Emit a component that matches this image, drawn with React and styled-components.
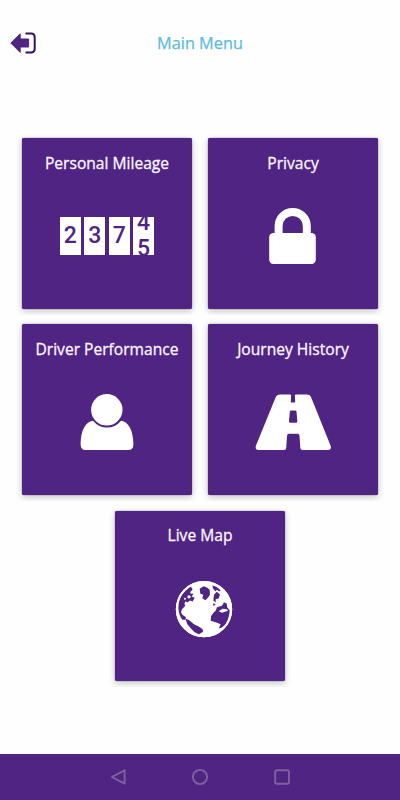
import React from 'react';
import styled, { createGlobalStyle } from 'styled-components';

const purple = '#502483';

const LogoutIcon = () => (
  <svg width="28" height="24" viewBox="0 0 28 24">
    <path d="M1.8 12 L11.2 2.8 V8 H19.6 V16 H11.2 V21.4 Z" fill={purple} stroke={purple} strokeLinejoin="round" />
    <path d="M16.5 2.6 H22 Q25.7 2.6 25.7 6.3 V17.8 Q25.7 21.5 22 21.5 H16.5" fill="none" stroke="#32115f" strokeWidth="2" />
  </svg>
)

const LockIcon = () => (
  <svg width="48" height="58" viewBox="0 0 48 58">
    <path d="M9.6 28 V19 A14.1 14.1 0 0 1 37.8 19 V28" fill="none" stroke="#fff" strokeWidth="8" />
    <rect x=".2" y="26" width="46.6" height="31" rx="4.2" fill="#fff" />
  </svg>
)

const PersonIcon = () => (
  <svg width="54" height="58" viewBox="0 0 54 58">
    <path d="M13 27.8 C5 29 .8 38 .6 51 Q.6 57 5.5 57 H48.5 Q53.4 57 53.4 51 C53.2 38 49 29 41 27.8 Q35.5 34.6 27 34.6 Q18.5 34.6 13 27.8 Z" fill="#fff" />
    <circle cx="26.8" cy="16.8" r="15.7" fill="#fff" />
  </svg>
)

const RoadIcon = () => (
  <svg width="76" height="57" viewBox="0 0 76 57">
    <path
      fillRule="evenodd"
      fill="#fff"
      d="M25 .5 H35 Q36.2 .5 36.1 2 L35.8 8.5 H40.2 L39.9 2 Q39.8 .5 41 .5 H52 Q55 .5 56.2 3.4 L75.5 51.5 Q77 56 72.5 56 H47.5 Q45.5 56 45.3 54 L44.5 42 Q44.3 39.8 42.5 39.8 H34 Q32.2 39.8 32 42 L31.2 54 Q31 56 29 56 H4 Q-.5 56 1 51.5 L20.6 3.4 Q21.8 .5 25 .5 Z M36 16.5 Q34.9 16.5 34.8 17.8 L34 27 Q33.9 28.8 35.3 28.8 H41 Q42.5 28.8 42.3 27 L41.5 17.8 Q41.4 16.5 40.2 16.5 Z"
    />
  </svg>
)

const GlobeIcon = () => (
  <GlobeSvg width="58" height="58" viewBox="29 30.5 174 174">
    <circle cx="116" cy="118" r="84.5" fill="#fff" />
    <g fill={purple}>
      <path d="M76 50 L82 58 L76 66 L84 72 L79 80 L88 84 L82 95 L74 92 L66 98 L61 94 L57 102 L60 108 L50 118 L47 127 L51 135 L62 142 L60 150 L51 150 C36 128 35 99 49 75 C56 64 65 55 76 50 Z" />
      <path d="M60 146 L72 151 L86 163 L100 170 L112 178 L113 186 L101 193 L88 187 L76 175 L66 163 Z" />
      <path d="M103 57 L115 49 L126 54 L133 60 L134 74 L129 82 L120 91 L111 85 L114 75 L105 72 Z" />
      <path d="M141 47 L153 51 L166 61 L162 65 L155 60 L150 64 L143 56 Z" />
      <path d="M146 75 L154 66 L164 74 L160 86 L151 88 L151 98 L144 92 Z" />
      <path d="M143 100 L151 103 L145 109 Z" />
      <path d="M155 112 L170 108 L176 97 L184 101 L186 113 L193 121 C193 136 188 152 179 166 L168 174 L160 176 L166 163 L151 157 L136 153 L137 139 L145 128 L151 123 Z" />
    </g>
    <g fill="#fff">
      <path d="M160 124 L172 117 L185 118 L188 123 L170 129 Z" />
      <circle cx="71" cy="81" r="5" />
      <circle cx="79" cy="68" r="4" />
      <circle cx="59" cy="87" r="3" />
    </g>
    <circle cx="116" cy="118" r="81.5" fill="none" stroke="#fff" strokeWidth="6" />
  </GlobeSvg>
)

const Odometer = () => (
  <Reels>
    <Reel>2</Reel>
    <Reel>3</Reel>
    <Reel>7</Reel>
    <Reel>
      <Turning>
        <span>4</span>
        <span>5</span>
      </Turning>
    </Reel>
  </Reels>
)

const MenuTile = ({ title, children }) => (
  <Tile>
    <TileTitle>{title}</TileTitle>
    <TileIcon>{children}</TileIcon>
  </Tile>
)

const App = () => (
  <Screen>
    <GlobalStyle />
    <Header>
      <LogoutButton aria-label="Log out"><LogoutIcon /></LogoutButton>
      <Title>Main Menu</Title>
    </Header>
    <Menu>
      <Row>
        <MenuTile title="Personal Mileage"><Odometer /></MenuTile>
        <MenuTile title="Privacy"><LockIcon /></MenuTile>
      </Row>
      <Row>
        <MenuTile title="Driver Performance"><PersonIcon /></MenuTile>
        <MenuTile title="Journey History"><RoadIcon /></MenuTile>
      </Row>
      <Row>
        <MenuTile title="Live Map"><GlobeIcon /></MenuTile>
      </Row>
    </Menu>
    <NavBar>
      <svg width="18" height="18" viewBox="0 0 18 18"><path d="M2.8 9 L15.6 2.3 V15.7 Z" /></svg>
      <svg width="18" height="18" viewBox="0 0 18 18"><circle cx="9" cy="9" r="7.1" /></svg>
      <svg width="18" height="18" viewBox="0 0 18 18"><rect x="2.2" y="2.2" width="13.8" height="13.6" rx="1.8" /></svg>
    </NavBar>
  </Screen>
)

const GlobalStyle = createGlobalStyle`
  body {
    margin: 0;
    background: #fff;
  }
  svg {
    display: block;
  }
`
const Screen = styled.div`
  display: flex;
  flex-direction: column;
  height: 800px;
  width: 400px;
  overflow: hidden;
  background: #fefefe;
  font-family: 'Open Sans', 'Noto Sans', sans-serif;
`
const Header = styled.header`
  display: grid;
  grid-template-columns: 40px 1fr 40px;
  align-items: center;
  height: 86px;
`
const LogoutButton = styled.button`
  padding: 0 0 0 9px;
  border: 0;
  background: none;
  cursor: pointer;
`
const Title = styled.h1`
  margin: 0;
  line-height: 24px;
  text-align: center;
  font-size: 16.3px;
  font-weight: 400;
  color: #5bbcdc;
  -webkit-text-stroke: 0.25px #5bbcdc;
`
const Menu = styled.main`
  flex: 1;
  padding: 44px 15px 0;
`
const Row = styled.div`
  display: flex;
  justify-content: center;
  gap: 16px;
  box-sizing: border-box;
  height: 184.8px;
  padding-top: 8px;
  margin-bottom: 1.5px;
  overflow: hidden;
`
const Tile = styled.div`
  display: flex;
  flex-direction: column;
  align-items: center;
  width: 170px;
  height: 170.8px;
  border-radius: 2px;
  background: ${purple};
  box-shadow: 0 2px 7px rgba(0, 0, 0, 0.24), 0 0 1px #30085f;
  cursor: pointer;
`
const TileTitle = styled.div`
  padding-top: 12.6px;
  line-height: 24px;
  font-size: 15.6px;
  font-weight: 400;
  white-space: nowrap;
  color: #fbf6ff;
  -webkit-text-stroke: 0.3px #fbf6ff;
`
const TileIcon = styled.div`
  display: flex;
  align-items: center;
  justify-content: center;
  height: 123px;
`
const GlobeSvg = styled.svg`
  margin-left: 8px;
`
const Reels = styled.div`
  display: flex;
  gap: 3.4px;
`
const Reel = styled.div`
  display: flex;
  align-items: center;
  justify-content: center;
  width: 21px;
  height: 38px;
  overflow: hidden;
  background: #fff;
  font-family: Roboto, sans-serif;
  font-size: 23px;
  line-height: 36px;
  font-weight: 500;
  color: ${purple};
`
const Turning = styled.div`
  display: flex;
  flex-direction: column;
  line-height: 26px;
`
const NavBar = styled.nav`
  display: flex;
  justify-content: center;
  gap: 64px;
  box-sizing: border-box;
  height: 46.5px;
  padding-top: 14px;
  background: ${purple};
  svg {
    fill: none;
    stroke: #81609f;
    stroke-width: 1.9;
    stroke-linejoin: round;
  }
`

export default App;
